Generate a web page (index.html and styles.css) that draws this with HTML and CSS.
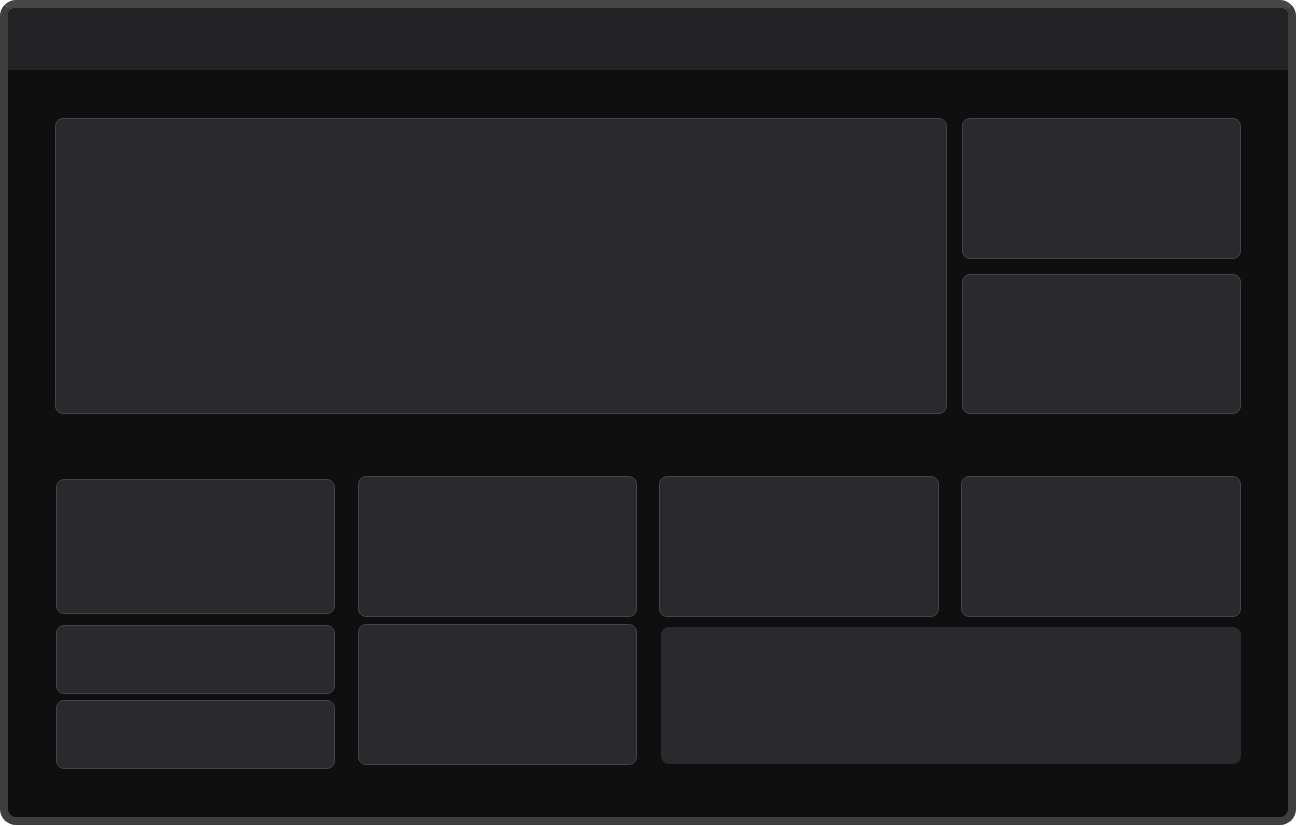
FILE: index.html
```html
<!DOCTYPE html>
<html>
<head lang="en">
    <meta charset="UTF-8">
    <title>Dashboard</title>

    <link rel="stylesheet" href="styles.css">

</head>
<body>

    <div id="frame">
        <!-- 顶部栏 -->
        <div id="topbar"></div>

        <div id="content">
            <!-- 上半部分 -->
            <div class="top">
                <div class="card big"></div>
                <div class="side">
                    <div class="card"></div>
                    <div class="card"></div>
                </div>
            </div>

            <!-- 下半部分 -->
            <div class="bottom">
                <div class="stack">
                    <div class="card s1"></div>
                    <div class="card s2"></div>
                    <div class="card s3"></div>
                </div>
                <div class="card b1"></div>
                <div class="card c1"></div>
                <div class="card d1"></div>
                <div class="card b2"></div>
                <div class="card wide"></div>
            </div>
        </div>
    </div>

</body>
</html>
```

FILE: styles.css
```css
*{
    margin: 0px;
    padding: 0px;
    box-sizing: border-box;
}

body{
    background: #ffffff;
    font-family: "Liberation Sans", Arial, sans-serif;
}

#frame{
    width: 1296px;
    height: 825px;
    border: 8px solid #3e3e3e;
    border-top-color: #474747;
    border-radius: 16px;
    background: #0f0f0f;
    overflow: hidden;
}

#topbar{
    height: 62px;
    background: #232325;
}

#content{
    padding: 48px 39px 0 47px;
}

.card{
    background: #2a2a2e;
    border: 1.5px solid #444449;
    border-radius: 8px;
}

.top{
    display: flex;
    gap: 15px;
    height: 296px;
}

.top .big{
    width: 892px;
}

.top .side{
    width: 279px;
    display: flex;
    flex-direction: column;
    gap: 15px;
}

.top .side .card{
    flex: 1;
}

.bottom{
    margin-top: 62px;
    display: grid;
    grid-template-columns: repeat(4, 280px);
    grid-template-rows: 141px 141px;
    column-gap: 22px;
    row-gap: 7px;
}

.stack{
    grid-row: 1 / 3;
    display: flex;
    flex-direction: column;
    margin-left: 1px;
}

.stack .card{
    flex-shrink: 0;
}

.stack .s1{
    margin-top: 3px;
    height: 135px;
}

.stack .s2{
    margin-top: 11px;
    height: 69px;
}

.stack .s3{
    margin-top: 6px;
    height: 69px;
}

.b1{ grid-column: 2; grid-row: 1; margin-left: 1px; }
.c1{ grid-column: 3; grid-row: 1; }
.d1{ grid-column: 4; grid-row: 1; }
.b2{ grid-column: 2; grid-row: 2; margin-left: 1px; }

.wide{
    grid-column: 3 / 5;
    grid-row: 2;
    margin: 3px 0 1px 2px;
    border: none;
}
```
